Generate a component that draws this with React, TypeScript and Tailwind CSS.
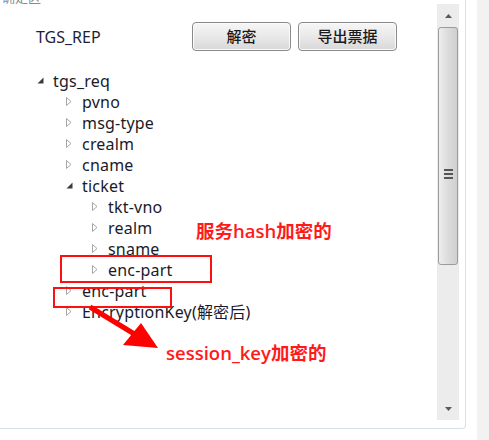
import type { ReactNode } from 'react'

type Node = { label: string; depth: 0 | 1 | 2; open?: boolean }

const rows: Node[] = [
  { label: 'tgs_req', depth: 0, open: true },
  { label: 'pvno', depth: 1 },
  { label: 'msg-type', depth: 1 },
  { label: 'crealm', depth: 1 },
  { label: 'cname', depth: 1 },
  { label: 'ticket', depth: 1, open: true },
  { label: 'tkt-vno', depth: 2 },
  { label: 'realm', depth: 2 },
  { label: 'sname', depth: 2 },
  { label: 'enc-part', depth: 2 },
  { label: 'enc-part', depth: 1 },
  { label: 'EncryptionKey(解密后)', depth: 1 },
]

const indent = ['pl-[37px]', 'pl-[66px]', 'pl-[92px]']

function Caret({ open }: { open?: boolean }) {
  return (
    <span className="w-[16px] h-[21px] flex items-center shrink-0">
      {open ? (
        <svg width="7" height="7" viewBox="0 0 7 7">
          <path d="M6.5 0.5 L6.5 6.5 L0.5 6.5 Z" fill="#3c3c3c" />
        </svg>
      ) : (
        <svg width="6" height="9" viewBox="0 0 6 9">
          <path d="M0.5 0.5 L5 4.5 L0.5 8.5 Z" fill="none" stroke="#a6a6a6" strokeWidth="1" />
        </svg>
      )}
    </span>
  )
}

function Btn({ children }: { children: ReactNode }) {
  return (
    <button className="w-[99px] h-[29px] rounded-[4px] border border-[#8a8a8a] bg-gradient-to-b from-[#f6f6f6] via-[#e9e9e9] to-[#d8d8d8] text-[15px] font-medium text-[#1a1a1a] shadow-[inset_0_0_0_1px_#fbfbfb]">
      {children}
    </button>
  )
}

export default function App() {
  return (
    <div className="w-[489px] h-[440px] bg-white flex overflow-hidden font-['Segoe_UI','Noto_Sans','Noto_Sans_CJK_SC',sans-serif]">
      <div className="w-[466px] h-[429px] border-r border-b border-[#d9e1e8] rounded-br-[4px] flex shrink-0">
        {/* content */}
        <div className="relative flex-1">
          <div className="text-[13px] leading-none text-[#8a8a8a] -mt-[9px] pl-[2px]">确定区</div>

          <div className="flex items-center mt-[18px] h-[29px]">
            <span className="w-[192px] shrink-0 pl-[36px] text-[16px] text-[#1e1e3a]">TGS_REP</span>
            <div className="flex gap-[7px]">
              <Btn>解密</Btn>
              <Btn>导出票据</Btn>
            </div>
          </div>

          <div className="mt-[19px]">
            {rows.map((r, i) => (
              <div key={i} className={`flex items-center h-[21px] ${indent[r.depth]}`}>
                <Caret open={r.open} />
                <span className="text-[16px] leading-none text-[#1a1a2a] tracking-[0.2px]">{r.label}</span>
              </div>
            ))}
          </div>

          {/* annotations */}
          <div className="absolute left-[60px] top-[255px] w-[152px] h-[28px] border-2 border-[#ff1010]" />
          <div className="absolute left-[53px] top-[287px] w-[119px] h-[21px] border-2 border-[#ff1010]" />
          <div className="absolute left-[196px] top-[217px] text-[18.5px] font-semibold text-[#ff1a1a] font-['Open_Sans','Noto_Sans_CJK_SC',sans-serif]">
            服务hash加密的
          </div>
          <div className="absolute left-[166px] top-[339px] text-[18.5px] font-semibold text-[#ff1a1a] font-['Open_Sans','Noto_Sans_CJK_SC',sans-serif]">
            session_key加密的
          </div>
          <svg className="absolute left-0 top-0" width="437" height="429" viewBox="0 0 437 429">
            <line x1="90" y1="307" x2="136" y2="335" stroke="#ff0000" strokeWidth="5" />
            <path d="M158 348 L123 345 L141 323 Z" fill="#ff0000" />
          </svg>
        </div>

        {/* scrollbar */}
        <div className="w-[22px] mt-[4px] mb-[8px] mr-[6px] bg-[#ececec] flex flex-col">
          <div className="h-[23px] flex items-center justify-center">
            <svg width="7" height="4" viewBox="0 0 7 4">
              <path d="M0 4 L3.5 0 L7 4 Z" fill="#5a5a5a" />
            </svg>
          </div>
          <div className="h-[238px] mx-[1px] rounded-[3px] border border-[#9b9b9b] bg-gradient-to-r from-[#eeeeee] via-[#dcdcdc] to-[#cfcfcf] flex items-center justify-center">
            <div className="flex flex-col gap-[2px] mt-[56px]">
              <div className="w-[9px] h-[2px] bg-[#555]" />
              <div className="w-[9px] h-[2px] bg-[#555]" />
              <div className="w-[9px] h-[2px] bg-[#555]" />
            </div>
          </div>
          <div className="flex-1" />
          <div className="h-[22px] flex items-center justify-center">
            <svg width="7" height="4" viewBox="0 0 7 4">
              <path d="M0 0 L7 0 L3.5 4 Z" fill="#5a5a5a" />
            </svg>
          </div>
        </div>
      </div>
      <div className="w-[11px]" />
      <div className="w-[12px] h-full bg-[#f2f2f2]" />
    </div>
  )
}
